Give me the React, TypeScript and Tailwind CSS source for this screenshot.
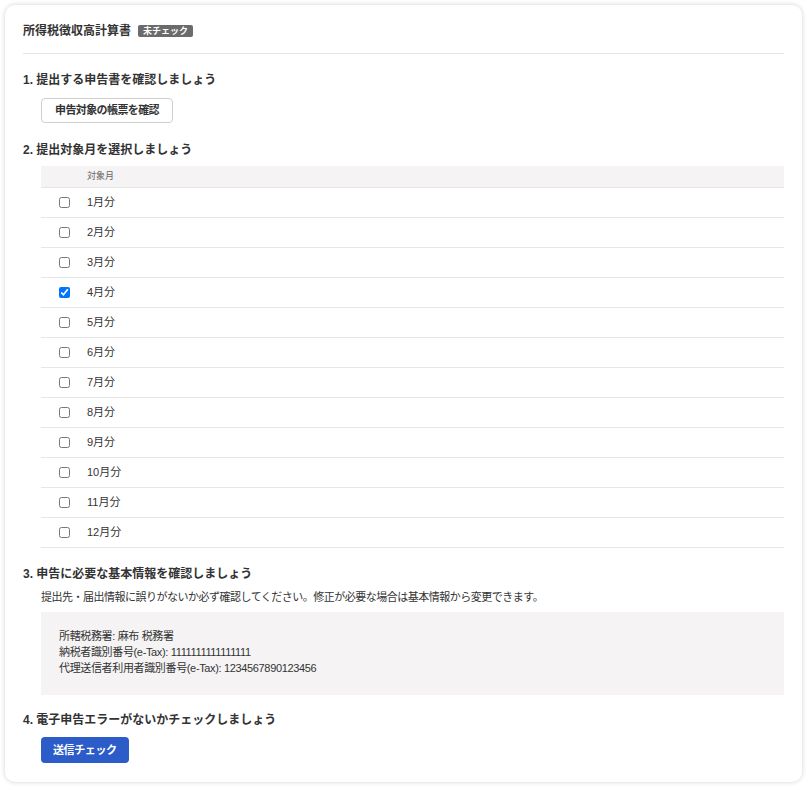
import { useState } from "react";

const months = [
  "1月分",
  "2月分",
  "3月分",
  "4月分",
  "5月分",
  "6月分",
  "7月分",
  "8月分",
  "9月分",
  "10月分",
  "11月分",
  "12月分",
];

function StepHeading({ children, className = "" }: { children: React.ReactNode; className?: string }) {
  return (
    <h2 className={`text-[12px] font-bold leading-5 text-[#333] ${className}`}>
      {children}
    </h2>
  );
}

export default function App() {
  const [checked, setChecked] = useState<number[]>([3]);

  const toggle = (i: number) =>
    setChecked((prev) => (prev.includes(i) ? prev.filter((x) => x !== i) : [...prev, i]));

  return (
    <div className="min-h-[788px] bg-white pt-[5px] font-[Liberation_Sans,Noto_Sans_CJK_JP,sans-serif]">
      <div className="ml-[5px] mr-[7px] rounded-[10px] bg-white px-[18px] pb-[19px] pt-4 shadow-[0_0_5px_rgba(0,0,0,0.18)]">
        {/* Title */}
        <div className="flex items-center gap-[7px]">
          <h1 className="text-[12px] font-bold leading-5 text-[#333]">所得税徴収高計算書</h1>
          <span className="rounded-[2px] bg-[#6b6b6b] px-[5px] text-[9px] font-bold leading-3 text-white">
            未チェック
          </span>
        </div>

        <div className="mt-3 border-t border-[#e6e6e6]" />

        {/* Step 1 */}
        <StepHeading className="mt-4">1. 提出する申告書を確認しましょう</StepHeading>
        <div className="ml-[18px] mt-[7px]">
          <button className="h-[25px] rounded-[4px] border border-[#cfcfcf] bg-white px-[13px] text-[11px] font-bold tracking-[-0.6px] text-[#333]">
            申告対象の帳票を確認
          </button>
        </div>

        {/* Step 2 */}
        <StepHeading className="mt-[17px]">2. 提出対象月を選択しましょう</StepHeading>
        <div className="ml-[18px] mt-[6px]">
          <div className="flex h-[22px] items-center border-b border-[#e6e6e6] bg-[#f5f3f3]">
            <div className="w-[46px]" />
            <span className="text-[9px] text-[#666]">対象月</span>
          </div>
          {months.map((m, i) => (
            <label
              key={m}
              className="flex h-[30px] cursor-pointer items-center border-b border-[#e6e6e6]"
            >
              <div className="flex w-[46px] justify-center">
                <input
                  type="checkbox"
                  className="m-0 h-[11px] w-[11px]"
                  checked={checked.includes(i)}
                  onChange={() => toggle(i)}
                />
              </div>
              <span className="text-[11px] text-[#333]">{m}</span>
            </label>
          ))}
        </div>

        {/* Step 3 */}
        <StepHeading className="mt-4">3. 申告に必要な基本情報を確認しましょう</StepHeading>
        <p className="ml-[18px] mt-[5px] text-[11px] leading-4 tracking-[-0.5px] text-[#333]">
          提出先・届出情報に誤りがないか必ず確認してください。修正が必要な場合は基本情報から変更できます。
        </p>
        <div className="ml-[18px] mt-[7px] bg-[#f5f3f3] px-[18px] pb-[19px] pt-4 text-[11px] leading-4 tracking-[-0.35px] text-[#333]">
          <div>所轄税務署: 麻布 税務署</div>
          <div>納税者識別番号(e-Tax): 1111111111111111</div>
          <div>代理送信者利用者識別番号(e-Tax): 1234567890123456</div>
        </div>

        {/* Step 4 */}
        <StepHeading className="mt-[15px]">4. 電子申告エラーがないかチェックしましょう</StepHeading>
        <div className="ml-[18px] mt-[7px]">
          <button className="h-[26px] rounded-[4px] bg-[#2b5cc8] px-[12px] text-[11px] font-bold tracking-[-0.4px] text-white">
            送信チェック
          </button>
        </div>
      </div>
    </div>
  );
}
